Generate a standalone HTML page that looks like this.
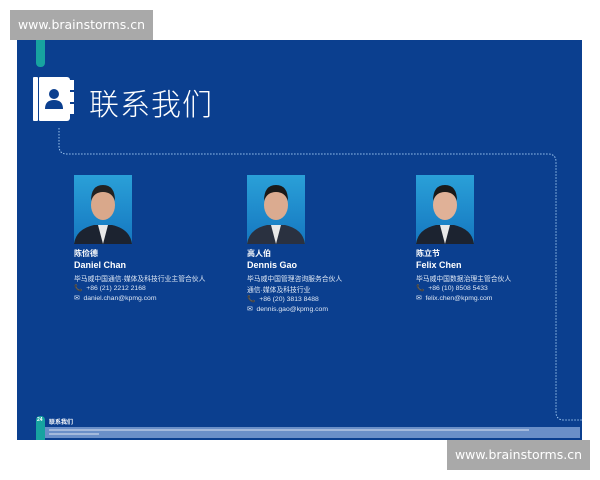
<!DOCTYPE html>
<html><head><meta charset="utf-8"><style>
*{margin:0;padding:0;box-sizing:border-box}
body{width:600px;height:480px;background:#fff;position:relative;overflow:hidden;font-family:"Liberation Sans","Noto Sans CJK SC",sans-serif}
.page{position:absolute;left:17px;top:40px;width:565px;height:400px;background:#0b3f8f}
.wm{position:absolute;background:#a9a9a9;color:#fff;font-size:12.5px;font-family:"DejaVu Sans",sans-serif;width:143px;text-align:center;line-height:30px;white-space:nowrap}
.a{position:absolute}
.photo{position:absolute;width:58px;height:69px;background:linear-gradient(180deg,#2aa0d8,#1577c0)}
.t{position:absolute;color:#fff;white-space:nowrap}
.cn{font-size:8px;font-weight:bold}
.en{font-size:9px;font-weight:bold}
.sm{font-size:6.8px;color:#dfe8f5}
</style></head><body>
<div class="page"></div>
<div class="a" style="left:36px;top:38px;width:9px;height:29px;background:#17a3a0;border-radius:0 0 4px 4px"></div>
<div class="wm" style="left:10px;top:10px;">www.brainstorms.cn</div>
<div class="a" style="left:33px;top:77px;width:5px;height:44px;background:#fff;border-radius:1px"></div>
<div class="a" style="left:39px;top:77px;width:31px;height:44px;background:#fff;border-radius:1px 3px 3px 1px"></div>
<div class="a" style="left:70px;top:80px;width:4px;height:10px;background:#fff"></div>
<div class="a" style="left:70px;top:92px;width:4px;height:10px;background:#fff"></div>
<div class="a" style="left:70px;top:104px;width:4px;height:10px;background:#fff"></div>
<svg class="a" style="left:43px;top:87px" width="22" height="24" viewBox="0 0 22 24"><circle cx="11" cy="7" r="5" fill="#0b3f8f"/><path d="M2 22 Q2 13 11 13 Q20 13 20 22 Z" fill="#0b3f8f"/></svg>
<div class="t" style="left:89px;top:80px;font-size:30px;font-weight:300;letter-spacing:1px;font-family:'Noto Sans CJK SC',sans-serif">联系我们</div>
<svg class="a" style="left:0;top:0" width="600" height="480"><path d="M59 128 V146 Q59 154 67 154 H548 Q556 154 556 162 V412 Q556 420 564 420 H582" fill="none" stroke="#9cc4ee" stroke-width="1" stroke-dasharray="1.5 1.5"/></svg>
<div class="photo" style="left:74px;top:175px"></div>
<div class="photo" style="left:247px;top:175px"></div>
<div class="photo" style="left:416px;top:175px"></div>
<svg class="a" style="left:74px;top:175px" width="58" height="69"><path d="M0 69 Q2 54 20 50 L38 50 Q56 54 58 69Z" fill="#1c2330"/><path d="M24 50 L29 69 L34 50Z" fill="#e8e8e8"/><ellipse cx="29" cy="30" rx="12" ry="15" fill="#d9a88b"/><path d="M17 26 Q17 10 29 10 Q41 10 41 26 Q38 17 29 17 Q20 17 17 26Z" fill="#222"/></svg>
<svg class="a" style="left:247px;top:175px" width="58" height="69"><path d="M0 69 Q2 54 20 50 L38 50 Q56 54 58 69Z" fill="#2a3140"/><path d="M24 50 L29 69 L34 50Z" fill="#e8e8e8"/><ellipse cx="29" cy="30" rx="12" ry="15" fill="#dbab90"/><path d="M17 26 Q17 10 29 10 Q41 10 41 26 Q38 17 29 17 Q20 17 17 26Z" fill="#1a1a1a"/></svg>
<svg class="a" style="left:416px;top:175px" width="58" height="69"><path d="M0 69 Q2 54 20 50 L38 50 Q56 54 58 69Z" fill="#1c2330"/><path d="M24 50 L29 69 L34 50Z" fill="#e8e8e8"/><ellipse cx="29" cy="30" rx="12" ry="15" fill="#e0b197"/><path d="M17 26 Q17 10 29 10 Q41 10 41 26 Q38 17 29 17 Q20 17 17 26Z" fill="#1a1a1a"/></svg>

<div class="t cn" style="left:74px;top:248px">陈俭德</div>
<div class="t en" style="left:74px;top:260px">Daniel Chan</div>
<div class="t sm" style="left:74px;top:273px">毕马威中国通信·媒体及科技行业主管合伙人</div>
<div class="t sm" style="left:74px;top:284px">📞&nbsp; +86 (21) 2212 2168</div>
<div class="t sm" style="left:74px;top:294px">✉&nbsp; daniel.chan@kpmg.com</div>

<div class="t cn" style="left:247px;top:248px">高人伯</div>
<div class="t en" style="left:247px;top:260px">Dennis Gao</div>
<div class="t sm" style="left:247px;top:273px">毕马威中国管理咨询服务合伙人</div>
<div class="t sm" style="left:247px;top:284px">通信·媒体及科技行业</div>
<div class="t sm" style="left:247px;top:295px">📞&nbsp; +86 (20) 3813 8488</div>
<div class="t sm" style="left:247px;top:305px">✉&nbsp; dennis.gao@kpmg.com</div>

<div class="t cn" style="left:416px;top:248px">陈立节</div>
<div class="t en" style="left:416px;top:260px">Felix Chen</div>
<div class="t sm" style="left:416px;top:273px">毕马威中国数据治理主管合伙人</div>
<div class="t sm" style="left:416px;top:284px">📞&nbsp; +86 (10) 8508 5433</div>
<div class="t sm" style="left:416px;top:294px">✉&nbsp; felix.chen@kpmg.com</div>

<div class="a" style="left:36px;top:416px;width:9px;height:24px;background:#17a3a0;border-radius:4px 4px 0 0"></div>
<div class="t" style="left:37px;top:417px;font-size:5px;font-weight:bold">24</div>
<div class="t" style="left:49px;top:417px;font-size:6px;font-weight:bold">联系我们</div>
<div class="a" style="left:45px;top:427px;width:535px;height:11px;background:#6a8fc8"></div>
<div class="a" style="left:49px;top:429px;width:480px;height:2px;background:#c9d6ea;opacity:.6"></div>
<div class="a" style="left:49px;top:433px;width:50px;height:2px;background:#c9d6ea;opacity:.6"></div>
<div class="wm" style="left:447px;top:440px;">www.brainstorms.cn</div>
</body></html>
